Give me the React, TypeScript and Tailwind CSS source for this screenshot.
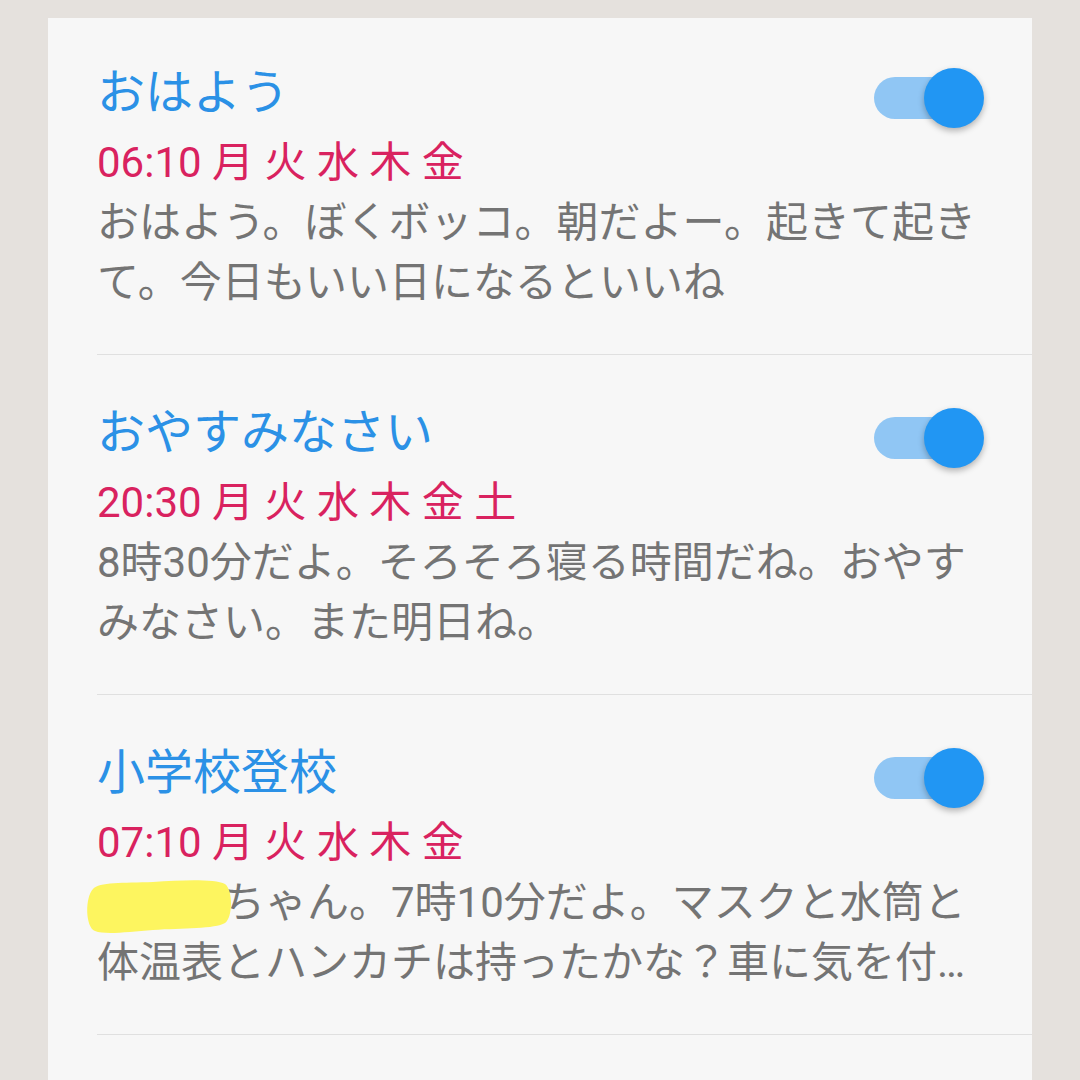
import React from "react";

type Item = {
  title: string;
  time: string;
  days: string[];
  lines: React.ReactNode[];
  first?: boolean;
};

function Toggle() {
  return (
    <div className="relative w-[110px] h-[60px] translate-y-[5px] shrink-0">
      <div className="absolute left-0 top-[9px] w-[104px] h-[42px] rounded-full bg-[#90c6f4]" />
      <div className="absolute right-0 top-0 w-[60px] h-[60px] rounded-full bg-[#2196f3] shadow-[0_3px_6px_rgba(0,0,0,0.28)]" />
    </div>
  );
}

function Blob() {
  return (
    <svg
      className="absolute left-[-14px] top-[6px]"
      width="150"
      height="56"
      viewBox="0 0 150 56"
    >
      <path
        d="M10 10 C 16 3, 40 4, 70 3 C 100 1, 132 0, 142 5 C 150 11, 150 38, 142 44 C 132 50, 100 49, 70 51 C 45 53, 22 56, 12 52 C 2 48, 2 18, 10 10 Z"
        fill="#fdf55f"
      />
    </svg>
  );
}

const items: Item[] = [
  {
    title: "おはよう",
    time: "06:10",
    days: ["月", "火", "水", "木", "金"],
    lines: [
      "おはよう。ぼくボッコ。朝だよー。起きて起き",
      "て。今日もいい日になるといいね",
    ],
    first: true,
  },
  {
    title: "おやすみなさい",
    time: "20:30",
    days: ["月", "火", "水", "木", "金", "土"],
    lines: [
      "8時30分だよ。そろそろ寝る時間だね。おやす",
      "みなさい。また明日ね。",
    ],
  },
  {
    title: "小学校登校",
    time: "07:10",
    days: ["月", "火", "水", "木", "金"],
    lines: [
      <span key="l" className="relative inline-block">
        <span className="relative inline-block">
          <span>　　　</span>
          <Blob />
        </span>
        ちゃん。7時10分だよ。マスクと水筒と
      </span>,
      "体温表とハンカチは持ったかな？車に気を付…",
    ],
  },
];

function Row({ item }: { item: Item }) {
  return (
    <div
      className={`ml-[49px] border-b border-[#e0e0e0] ${
        item.first ? "pt-[47px]" : "pt-[50px]"
      } pb-[41px]`}
    >
      <div className="flex h-[56px] items-center justify-between pr-[48px]">
        <div className="text-[48px] leading-[56px] text-[#2b91e6] whitespace-nowrap">
          {item.title}
        </div>
        <Toggle />
      </div>
      <div className="mt-[14px] text-[42px] leading-[56px] text-[#d9225f] whitespace-nowrap">
        {item.time}
        {item.days.map((d) => (
          <span key={d}> {d}</span>
        ))}
      </div>
      <div className="mt-[2px] text-[42px] leading-[60px] text-[#747474]">
        {item.lines.map((l, i) => (
          <div key={i} className="whitespace-nowrap">
            {l}
          </div>
        ))}
      </div>
    </div>
  );
}

export default function App() {
  return (
    <div
      className="w-[1080px] h-[1080px] overflow-hidden bg-[#e5e1dd]"
      style={{ fontFamily: 'Roboto, "Noto Sans CJK JP", sans-serif' }}
    >
      <div className="ml-[48px] mt-[18px] w-[984px] h-[1062px] bg-[#f7f7f7]">
        {items.map((it) => (
          <Row key={it.title} item={it} />
        ))}
      </div>
    </div>
  );
}
